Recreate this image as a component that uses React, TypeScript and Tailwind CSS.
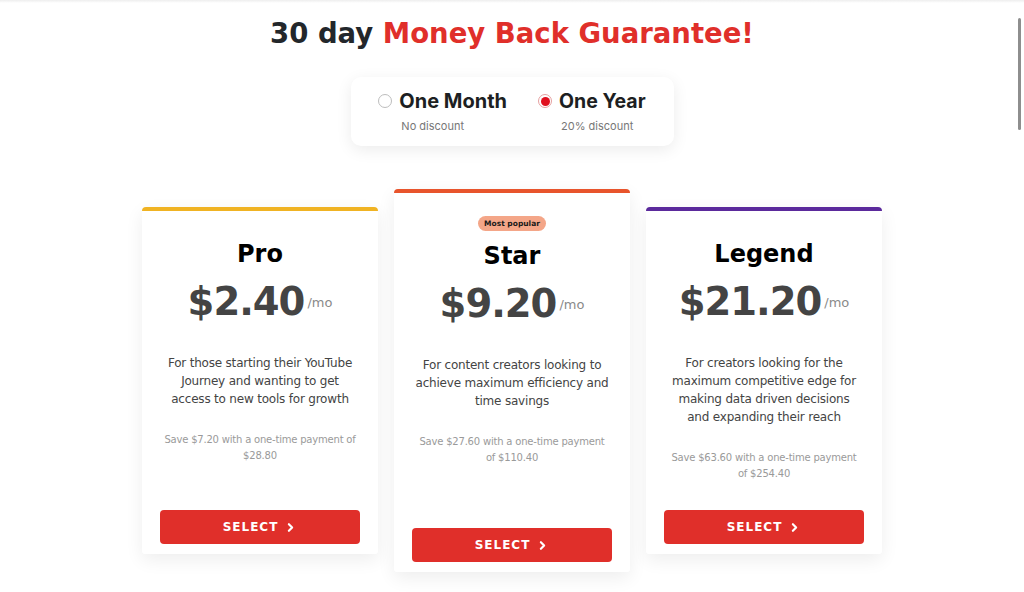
import { ChevronRight } from 'lucide-react'

const PLANS = [
  {
    name: 'Pro',
    price: '$2.40',
    bar: 'bg-[#f0b323]',
    desc: 'For those starting their YouTube Journey and wanting to get access to new tools for growth',
    save: 'Save $7.20 with a one-time payment of $28.80',
    popular: false,
  },
  {
    name: 'Star',
    price: '$9.20',
    bar: 'bg-[#e8542c]',
    desc: 'For content creators looking to achieve maximum efficiency and time savings',
    save: 'Save $27.60 with a one-time payment of $110.40',
    popular: true,
  },
  {
    name: 'Legend',
    price: '$21.20',
    bar: 'bg-[#5b2a9c]',
    desc: 'For creators looking for the maximum competitive edge for making data driven decisions and expanding their reach',
    save: 'Save $63.60 with a one-time payment of $254.40',
    popular: false,
  },
]

const heading = { fontFamily: '"DejaVu Sans", sans-serif' }

function PlanCard({ plan }: { plan: (typeof PLANS)[number] }) {
  return (
    <div
      className={`w-[236px] ${plan.popular ? 'h-[383px]' : 'h-[347px]'} bg-white rounded-b-[3px] shadow-[0_6px_18px_rgba(0,0,0,0.07)] flex flex-col`}
    >
      <div className={`h-[4px] rounded-t-full ${plan.bar}`} />
      <div className="flex flex-col items-center flex-1 px-[18px] pb-[10px] text-center">
        {plan.popular && (
          <span
            className="mt-[23px] h-[15px] px-[6px] rounded-full bg-[#f4a688] text-[7.5px] font-bold text-[#1a1a1a] leading-[15px]"
            style={heading}
          >
            Most popular
          </span>
        )}
        <h2
          className={`${plan.popular ? 'mt-[10px]' : 'mt-[28px]'} text-[24px] leading-[30px] font-bold text-black`}
          style={heading}
        >
          {plan.name}
        </h2>
        <div className="mt-[10px] flex items-center" style={heading}>
          <span className="text-[38.5px] leading-[46px] font-bold text-[#444] tracking-[-1px]">{plan.price}</span>
          <span className="text-[13px] text-[#8a8a8a] ml-[3px] mt-[2px]">/mo</span>
        </div>
        <p
          className="mt-[29px] px-[2.5px] text-[12px] leading-[18px] text-[#444] tracking-[-0.2px]"
          style={heading}
        >
          {plan.desc}
        </p>
        <p className="mt-[24px] px-[2.5px] text-[10px] leading-[16px] text-[#9a9a9a] tracking-[-0.2px]" style={heading}>
          {plan.save}
        </p>
        <button
          className="mt-auto w-full h-[34px] rounded-[4px] bg-[#e02f2a] text-white text-[12px] font-bold tracking-[1px] flex items-center justify-center gap-[6px]"
          style={heading}
        >
          SELECT
          <ChevronRight size={13} strokeWidth={4} />
        </button>
      </div>
    </div>
  )
}

export default function App() {
  return (
    <div className="relative w-[1024px] h-[592px] bg-white overflow-hidden">
      <div className="h-[3px] bg-gradient-to-b from-[#eee] to-white" />
      <div className="absolute right-[3px] top-[18px] w-[3px] h-[112px] bg-[#8e8e8e] rounded-full" />

      <h1
        className="mt-[13px] text-center text-[27.5px] leading-[34px] font-bold text-[#23272b]"
        style={heading}
      >
        30 day <span className="text-[#e02f2a]">Money Back Guarantee!</span>
      </h1>

      <div className="mt-[27px] flex justify-center">
        <div
          className="w-[323px] h-[69px] bg-white rounded-[10px] shadow-[0_4px_16px_rgba(0,0,0,0.08)] flex justify-center gap-[31px] pt-[12px]"
          style={{ fontFamily: 'Inter, sans-serif' }}
        >
          <div className="flex flex-col">
            <div className="flex items-center gap-[7px]">
              <span className="w-[14px] h-[14px] rounded-full border border-[#bdbdbd] bg-white" />
              <span className="text-[20px] leading-[24px] font-bold text-[#1d1f22]">One Month</span>
            </div>
            <span className="mt-[5px] text-[11px] text-[#777] pl-[23px]">No discount</span>
          </div>
          <div className="flex flex-col">
            <div className="flex items-center gap-[7px]">
              <span className="w-[14px] h-[14px] rounded-full border border-[#e6a0a0] bg-white flex items-center justify-center">
                <span className="w-[9px] h-[9px] rounded-full bg-[#e0101e]" />
              </span>
              <span className="text-[19.5px] leading-[24px] font-bold text-[#1d1f22]">One Year</span>
            </div>
            <span className="mt-[5px] text-[11px] text-[#777] pl-[23px]">20% discount</span>
          </div>
        </div>
      </div>

      <div className="mt-[43px] flex justify-center items-center gap-[16px]">
        {PLANS.map(p => (
          <PlanCard key={p.name} plan={p} />
        ))}
      </div>
    </div>
  )
}
